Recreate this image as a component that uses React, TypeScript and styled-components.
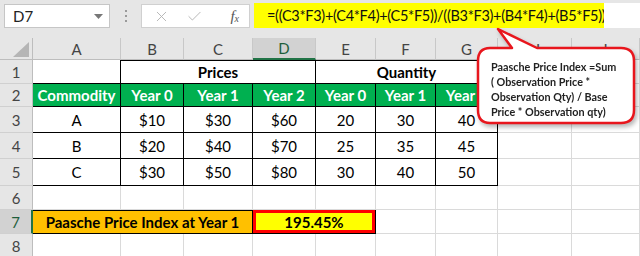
import styled, { createGlobalStyle } from "styled-components";
import { Check, X } from "lucide-react";

const GlobalStyle = createGlobalStyle`
  html, body {
    margin: 0;
    padding: 0;
    background: #ffffff;
  }
  body {
    font-family: Lato, "Liberation Sans", sans-serif;
  }
`;

type Tone = "plain" | "green" | "orange" | "yellow";

interface CellDef {
  text?: string;
  span?: number;
  tone?: Tone;
  bold?: boolean;
  boxed?: boolean;
  top?: boolean;
}

const COLUMNS = ["A", "B", "C", "D", "E", "F", "G", "H", "I"];
const SELECTED_COL = "D";
const SELECTED_ROW = 7;
const ROW_HEIGHTS = [24, 23, 26, 26, 27, 24, 24, 24];

const plain = (n: number): CellDef[] => Array.from({ length: n }, () => ({}));

const dataRow = (name: string, values: string[]): CellDef[] => [
  { text: name, boxed: true },
  ...values.map((v) => ({ text: v, boxed: true })),
  ...plain(2),
];

const rows: CellDef[][] = [
  [
    { boxed: true },
    { text: "Prices", span: 3, bold: true, boxed: true, top: true },
    { text: "Quantity", span: 3, bold: true, boxed: true, top: true },
    ...plain(2),
  ],
  [
    { text: "Commodity", tone: "green", bold: true, boxed: true },
    ...["Year 0", "Year 1", "Year 2", "Year 0", "Year 1", "Year 2"].map(
      (t): CellDef => ({ text: t, tone: "green", bold: true, boxed: true })
    ),
    ...plain(2),
  ],
  dataRow("A", ["$10", "$30", "$60", "20", "30", "40"]),
  dataRow("B", ["$20", "$40", "$70", "25", "35", "45"]),
  dataRow("C", ["$30", "$50", "$80", "30", "40", "50"]),
  plain(9),
  [
    {
      text: "Paasche Price Index at Year 1",
      span: 3,
      tone: "orange",
      bold: true,
      boxed: true,
      top: true,
    },
    { text: "195.45%", span: 2, tone: "yellow", bold: true, boxed: true },
    ...plain(4),
  ],
  plain(9),
];

const FORMULA = "=((C3*F3)+(C4*F4)+(C5*F5))/((B3*F3)+(B4*F4)+(B5*F5))";

const App = () => {
  return (
    <>
      <GlobalStyle />
      <Window>
        <FormulaBar>
          <NameBox>
            <span>D7</span>
            <svg width="9" height="5" viewBox="0 0 9 5">
              <path d="M0 0 L9 0 L4.5 5 Z" fill="#777" />
            </svg>
          </NameBox>
          <Grip>
            <i />
            <i />
            <i />
          </Grip>
          <FormulaButtons>
            <X size={17} strokeWidth={1.3} color="#b3b3b3" />
            <Check size={17} strokeWidth={1.3} color="#b3b3b3" />
            <FxLabel>
              f<sub>x</sub>
            </FxLabel>
          </FormulaButtons>
          <FormulaInput>
            <Highlight>{FORMULA}</Highlight>
          </FormulaInput>
        </FormulaBar>

        <Sheet>
          <Corner>
            <svg width="16" height="15" viewBox="0 0 16 15">
              <path d="M16 0 L16 15 L0 15 Z" fill="#b5b5b5" />
            </svg>
          </Corner>
          {COLUMNS.map((c) => (
            <ColHead key={c} $selected={c === SELECTED_COL}>
              {c}
            </ColHead>
          ))}

          {rows.map((row, ri) => (
            <Row key={ri} row={row} index={ri + 1} />
          ))}
        </Sheet>

        <Callout>
          <svg width="162" height="104" viewBox="0 0 162 104">
            <path
              d="M14 21 L36 21 L22 2 L61 21 L145 21 Q158 21 158 34 L158 83 Q158 96 145 96 L14 96 Q2 96 2 83 L2 34 Q2 21 14 21 Z"
              fill="#ffffff"
              stroke="#e8161d"
              strokeWidth="2.5"
              strokeLinejoin="round"
            />
          </svg>
          <CalloutText>
            Paasche Price Index =Sum
            <br />( Observation Price *
            <br />
            Observation Qty) / Base
            <br />
            Price * Observation qty)
          </CalloutText>
        </Callout>
      </Window>
    </>
  );
};

const Row = ({ row, index }: { row: CellDef[]; index: number }) => (
  <>
    <RowHead $selected={index === SELECTED_ROW}>{index}</RowHead>
    {row.map((cell, ci) => (
      <Cell
        key={ci}
        $span={cell.span ?? 1}
        $tone={cell.tone ?? "plain"}
        $bold={!!cell.bold}
        $boxed={!!cell.boxed}
        $top={!!cell.top}
      >
        {cell.text}
      </Cell>
    ))}
  </>
);

export default App;

const toneBg: Record<Tone, string> = {
  plain: "#ffffff",
  green: "#00b050",
  orange: "#ffc000",
  yellow: "#ffff00",
};

const Window = styled.div`
  position: relative;
  width: 640px;
  height: 256px;
  overflow: hidden;
  background: #ffffff;
`;

const FormulaBar = styled.div`
  display: flex;
  align-items: stretch;
  height: 38px;
  box-sizing: border-box;
  padding: 4px 0 10px 4px;
  background: #e6e6e6;
`;

const NameBox = styled.div`
  display: flex;
  align-items: center;
  justify-content: space-between;
  width: 106px;
  box-sizing: border-box;
  padding: 0 6px 0 8px;
  background: #ffffff;
  border: 1px solid #c6c6c6;
  font-size: 15px;
  color: #222;
`;

const Grip = styled.div`
  width: 31px;
  display: flex;
  flex-direction: column;
  align-items: center;
  justify-content: center;
  gap: 3px;

  i {
    width: 2px;
    height: 2px;
    background: #9a9a9a;
  }
`;

const FormulaButtons = styled.div`
  display: flex;
  align-items: center;
  gap: 16px;
  width: 109px;
  box-sizing: border-box;
  padding: 0 10px 0 11px;
  background: #ffffff;
  border: 1px solid #d0d0d0;
`;

const FxLabel = styled.span`
  margin-left: auto;
  font-family: "Liberation Serif", serif;
  font-style: italic;
  font-size: 15px;
  color: #555;

  sub {
    font-size: 10px;
    vertical-align: -1px;
  }
`;

const FormulaInput = styled.div`
  flex: 1;
  margin-left: 4px;
  margin-top: -1px;
  display: flex;
  background: #ffffff;
`;

const Highlight = styled.div`
  width: 350px;
  box-sizing: border-box;
  padding-left: 13px;
  display: flex;
  align-items: center;
  background: #ffff00;
  font-size: 14.5px;
  letter-spacing: -0.3px;
  color: #111;
  white-space: nowrap;
  overflow: hidden;
`;

const Sheet = styled.div`
  display: grid;
  grid-template-columns: 33px 88px 63px 69px 63px 60px 60px 62px 74px 1fr;
  grid-template-rows: 22px ${ROW_HEIGHTS.map((h) => `${h}px`).join(" ")};
`;

const Corner = styled.div`
  display: flex;
  align-items: flex-end;
  justify-content: flex-end;
  padding: 0 3px 2px 0;
  background: #e6e6e6;
  border-right: 1px solid #bdbdbd;
  border-bottom: 1px solid #bdbdbd;
`;

const ColHead = styled.div<{ $selected: boolean }>`
  display: flex;
  align-items: center;
  justify-content: center;
  background: ${(p) => (p.$selected ? "#d2d2d2" : "#e6e6e6")};
  border-right: 1px solid #c8c8c8;
  border-bottom: ${(p) => (p.$selected ? "2px solid #217346" : "1px solid #bdbdbd")};
  font-size: 15px;
  color: ${(p) => (p.$selected ? "#1e5e3b" : "#444")};
`;

const RowHead = styled.div<{ $selected: boolean }>`
  display: flex;
  align-items: center;
  justify-content: center;
  background: ${(p) => (p.$selected ? "#d2d2d2" : "#e6e6e6")};
  border-bottom: 1px solid #d0d0d0;
  border-right: ${(p) => (p.$selected ? "2px solid #217346" : "1px solid #bdbdbd")};
  font-size: 15px;
  color: ${(p) => (p.$selected ? "#1e5e3b" : "#444")};
`;

const Cell = styled.div<{
  $span: number;
  $tone: Tone;
  $bold: boolean;
  $boxed: boolean;
  $top: boolean;
}>`
  grid-column: span ${(p) => p.$span};
  display: flex;
  align-items: center;
  justify-content: center;
  min-width: 0;
  overflow: hidden;
  white-space: nowrap;
  background: ${(p) => toneBg[p.$tone]};
  border-right: 1px solid ${(p) => (p.$boxed ? "#000" : "#dadada")};
  border-bottom: 1px solid ${(p) => (p.$boxed ? "#000" : "#dadada")};
  box-shadow: ${(p) =>
    p.$tone === "yellow"
      ? "inset 0 0 0 3px #ff0000"
      : p.$top
        ? "inset 0 1px 0 #000"
        : "none"};
  font-size: 15px;
  font-weight: ${(p) => (p.$bold ? 700 : 400)};
  color: ${(p) => (p.$tone === "green" ? "#ffffff" : "#000")};
`;

const Callout = styled.div`
  position: absolute;
  left: 476px;
  top: 27px;
  width: 162px;
  height: 104px;
  filter: drop-shadow(2px 3px 2px rgba(0, 0, 0, 0.28));

  svg {
    position: absolute;
    left: 0;
    top: 0;
  }
`;

const CalloutText = styled.div`
  position: relative;
  padding: 32px 0 0 15px;
  font-size: 10.8px;
  line-height: 15px;
  font-weight: 700;
  color: #222;
  white-space: nowrap;
`;
